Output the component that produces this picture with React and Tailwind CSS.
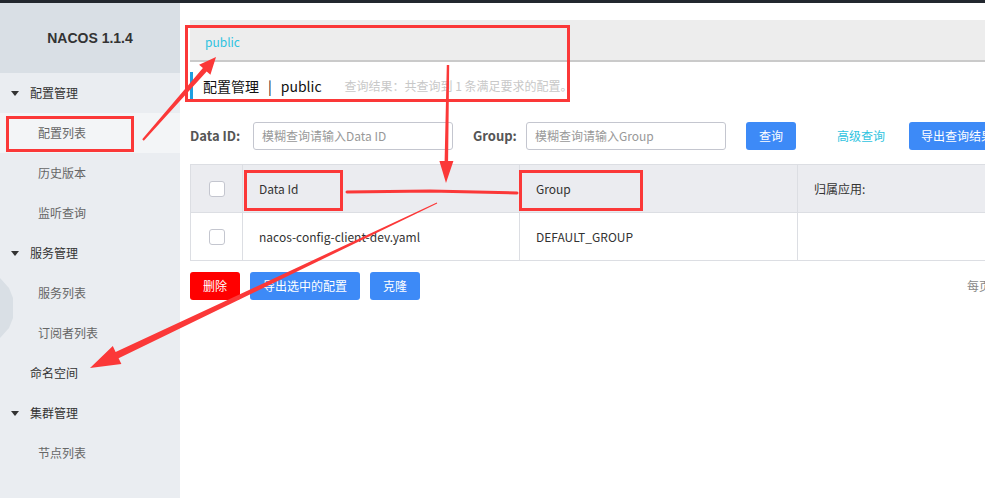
import React from 'react'

const FONT = { fontFamily: '"Noto Sans CJK SC", "Noto Sans", sans-serif' }
const RED = '#fb3838'

// polygon for a tapered arrow: shaft from w0 to w1, head at the end
function arrowPoints([x0, y0], [x1, y1], w0, w1, headLen, headW) {
  const dx = x1 - x0
  const dy = y1 - y0
  const len = Math.hypot(dx, dy)
  const ux = dx / len
  const uy = dy / len
  const nx = -uy
  const ny = ux
  const bx = x1 - ux * headLen
  const by = y1 - uy * headLen
  const p = (x, y, s) => `${(x + nx * s).toFixed(1)},${(y + ny * s).toFixed(1)}`
  return [
    p(x0, y0, w0 / 2),
    p(bx, by, w1 / 2),
    p(bx, by, headW / 2),
    `${x1},${y1}`,
    p(bx, by, -headW / 2),
    p(bx, by, -w1 / 2),
    p(x0, y0, -w0 / 2),
  ].join(' ')
}

const MENU = [
  { label: '配置管理', group: true },
  { label: '配置列表', active: true },
  { label: '历史版本' },
  { label: '监听查询' },
  { label: '服务管理', group: true },
  { label: '服务列表' },
  { label: '订阅者列表' },
  { label: '命名空间', top: true },
  { label: '集群管理', group: true },
  { label: '节点列表' },
]

function Checkbox() {
  return <span className="block w-4 h-4 rounded-[3px] border border-[#c4c6cf] bg-white" />
}

function Sidebar() {
  return (
    <aside className="relative w-[180px] shrink-0 bg-[#eaedf1]">
      <div className="h-[70px] bg-[#d9dfe5] flex items-center justify-center">
        <span className="text-[14px] font-bold text-[#333]" style={{ fontFamily: '"Liberation Sans", Arial, sans-serif' }}>
          NACOS 1.1.4
        </span>
      </div>
      <ul>
        {MENU.map((m) => (
          <li
            key={m.label}
            className={`h-10 flex items-center text-[12px] ${m.active ? 'bg-[#f3f5f7]' : ''} ${
              m.group || m.top ? 'text-[#333]' : 'text-[#666] pl-[38px]'
            } ${m.top ? 'pl-[30px]' : ''}`}
          >
            {m.group && (
              <>
                <span className="ml-[11px] mr-[11px] w-0 h-0 border-x-[4px] border-x-transparent border-t-[5px] border-t-[#333]" />
                {m.label}
              </>
            )}
            {!m.group && m.label}
          </li>
        ))}
      </ul>
      <svg className="absolute left-0 top-[275px]" width="14" height="60" viewBox="0 0 14 60">
        <polygon points="0,0 9,10 13,20 13,40 9,50 0,60" fill="#d9dfe5" />
      </svg>
    </aside>
  )
}

function Main() {
  return (
    <main className="flex-1 bg-white pl-[10px] pt-[17px] overflow-hidden">
      <div className="h-[42px] bg-[#ededed] border-b-2 border-[#cacaca] flex items-center pl-[15px] pt-[3px]">
        <span className="text-[12px] text-[#2fc3e0]">public</span>
      </div>
      <div className="mt-[10px] h-[28px] flex items-center border-l-[3px] border-[#1e9fe0]">
        <span className="ml-[10px] text-[14px] text-[#111]">配置管理</span>
        <span className="mx-[9px] text-[14px] text-[#111]">|</span>
        <span className="text-[14px] text-[#111]">public</span>
        <span className="ml-[23px] text-[12px] text-[#c8c8c8]">查询结果：共查询到 1 条满足要求的配置。</span>
      </div>
      <div className="mt-[22px] flex items-center h-[28px] whitespace-nowrap">
        <span className="w-[63px] shrink-0 text-[13px] font-bold text-[#555]">Data ID:</span>
        <div className="w-[200px] shrink-0 h-[28px] border border-[#c4c6cf] rounded-[3px] flex items-center px-[8px] text-[12px] text-[#999]">
          模糊查询请输入Data ID
        </div>
        <span className="ml-[20px] w-[53px] shrink-0 text-[13px] font-bold text-[#555]">Group:</span>
        <div className="w-[200px] shrink-0 h-[28px] border border-[#c4c6cf] rounded-[3px] flex items-center px-[8px] text-[12px] text-[#999]">
          模糊查询请输入Group
        </div>
        <button className="ml-[20px] w-[50px] shrink-0 h-[28px] rounded-[3px] bg-[#3d8af7] text-white text-[12px]">查询</button>
        <span className="ml-[41px] w-[47px] shrink-0 text-[12px] text-[#2fc3e0]">高级查询</span>
        <button className="ml-[25px] shrink-0 h-[28px] px-[12px] rounded-[3px] bg-[#3d8af7] text-white text-[12px]">导出查询结果</button>
      </div>
      <table className="mt-[14px] w-[1000px] border-collapse text-[12px] text-[#333] table-fixed">
        <colgroup>
          <col className="w-[52px]" />
          <col className="w-[277px]" />
          <col className="w-[278px]" />
          <col />
        </colgroup>
        <thead>
          <tr className="h-[48px] bg-[#ebecf0]">
            <th className="border border-[#dcdee3] font-normal">
              <div className="flex justify-center"><Checkbox /></div>
            </th>
            <th className="border border-[#dcdee3] font-normal text-left pl-[16px]">Data Id</th>
            <th className="border border-[#dcdee3] font-normal text-left pl-[16px]">Group</th>
            <th className="border border-[#dcdee3] font-normal text-left pl-[16px]">归属应用:</th>
          </tr>
        </thead>
        <tbody>
          <tr className="h-[48px]">
            <td className="border border-[#dcdee3]">
              <div className="flex justify-center"><Checkbox /></div>
            </td>
            <td className="border border-[#dcdee3] pl-[16px]">nacos-config-client-dev.yaml</td>
            <td className="border border-[#dcdee3] pl-[16px]">DEFAULT_GROUP</td>
            <td className="border border-[#dcdee3]" />
          </tr>
        </tbody>
      </table>
      <div className="mt-[11px] flex items-center gap-[10px] h-[28px] whitespace-nowrap">
        <button className="w-[50px] shrink-0 h-[28px] rounded-[3px] bg-[#ff0000] text-white text-[12px]">删除</button>
        <button className="w-[110px] shrink-0 h-[28px] rounded-[3px] bg-[#3d8af7] text-white text-[12px]">导出选中的配置</button>
        <button className="w-[50px] shrink-0 h-[28px] rounded-[3px] bg-[#3d8af7] text-white text-[12px]">克隆</button>
        <span className="ml-[537px] shrink-0 text-[12px] text-[#888]">每页</span>
      </div>
    </main>
  )
}

function Annotations() {
  return (
    <svg className="absolute inset-0 pointer-events-none" width="985" height="498" viewBox="0 0 985 498">
      <g fill="none" stroke={RED} strokeWidth="3">
        <rect x="186.5" y="26.5" width="382" height="74" />
        <rect x="7.5" y="117.5" width="125" height="33" />
        <rect x="245.5" y="171.5" width="96" height="38" />
        <rect x="520.5" y="171.5" width="121" height="38" />
      </g>
      <g fill={RED}>
        <polygon points={arrowPoints([143, 140], [216, 57], 2, 5, 17, 15)} />
        <polygon points={arrowPoints([448, 65], [446, 183], 2.5, 3.5, 22, 14)} />
        <polygon points={arrowPoints([437, 203], [90, 368], 0.8, 7, 30, 20)} />
      </g>
      <path d="M347 192 L 430 191 L 517 193" stroke={RED} strokeWidth="3" strokeLinecap="round" fill="none" />
    </svg>
  )
}

export default function App() {
  return (
    <div className="relative w-[985px] h-[498px] overflow-hidden bg-white flex flex-col" style={FONT}>
      <div className="h-[3px] bg-[#22272e] shrink-0" />
      <div className="flex flex-1 min-h-0">
        <Sidebar />
        <Main />
      </div>
      <Annotations />
    </div>
  )
}
